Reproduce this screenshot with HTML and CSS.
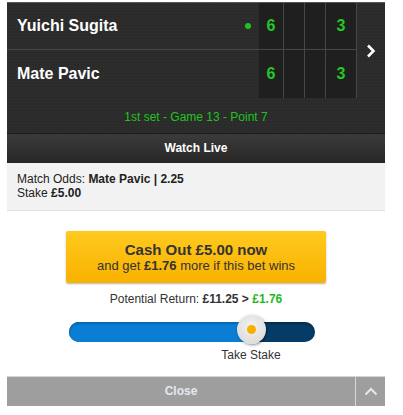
FILE: index.html
```html
<!DOCTYPE html>
<html lang="en">
<head>
  <meta charset="UTF-8">
  <meta name="viewport" content="width=device-width, initial-scale=1.0">
  <title>Cash Out</title>
  <link rel="stylesheet" href="styles.css">
</head>
<body>
  <div class="bet-card">
    <!-- Scoreboard -->
    <div class="scoreboard">
      <div class="player row-top">Yuichi Sugita <span class="serve"></span></div>
      <div class="cell c1 row-top">6</div>
      <div class="cell c2 row-top"></div>
      <div class="cell c3 row-top"></div>
      <div class="cell c4 row-top">3</div>
      <div class="more">
        <svg width="10" height="14" viewBox="0 0 10 14"><path d="M2 1.5 L7.5 7 L2 12.5" fill="none" stroke="#fff" stroke-width="2.6"/></svg>
      </div>
      <div class="player">Mate Pavic</div>
      <div class="cell c1">6</div>
      <div class="cell c2"></div>
      <div class="cell c3"></div>
      <div class="cell c4">3</div>
      <div class="status">1st set - Game 13 - Point 7</div>
    </div>
    <div class="watch-live">Watch Live</div>

    <!-- Bet info -->
    <div class="bet-info">
      <div>Match Odds: <b>Mate Pavic | 2.25</b></div>
      <div>Stake <b>£5.00</b></div>
    </div>

    <!-- Cash out -->
    <div class="cashout">
      <button class="cashout-btn">
        <span class="main">Cash Out £5.00 now</span>
        <span class="sub">and get <b>£1.76</b> more if this bet wins</span>
      </button>
      <div class="potential">Potential Return: <b>£11.25 &gt;</b> <b class="green">£1.76</b></div>
      <div class="slider">
        <div class="track">
          <div class="fill" style="width: 74%"></div>
          <div class="knob" style="left: 74%"><span class="dot"></span></div>
        </div>
        <div class="slider-label" style="left: 74%">Take Stake</div>
      </div>
    </div>

    <div class="close-bar">
      <div class="close">Close</div>
      <div class="collapse">
        <svg width="14" height="9" viewBox="0 0 14 9"><path d="M1.5 7.5 L7 2 L12.5 7.5" fill="none" stroke="#e8e8e8" stroke-width="2"/></svg>
      </div>
    </div>
  </div>
</body>
</html>
```

FILE: styles.css
```css
/* Reset styles */
* {
  margin: 0;
  padding: 0;
  box-sizing: border-box;
}

body {
  font-family: "Liberation Sans", Arial, sans-serif;
  background-color: #fff;
  color: #222;
}

.bet-card {
  width: 378px;
  margin-left: 7px;
  padding-top: 2px;
}

/* Scoreboard */
.scoreboard {
  display: grid;
  grid-template-columns: 252px 25px 21px 21px 31px 28px;
  grid-template-rows: 47px 48px 35px;
  background-color: #2a2a2a;
  background-image:
    repeating-linear-gradient(0deg, rgba(255,255,255,0.012) 0 1px, transparent 1px 3px),
    repeating-linear-gradient(90deg, rgba(255,255,255,0.012) 0 1px, transparent 1px 3px);
  border-top: 1px solid #555;
}

.row-top {
  border-bottom: 1px solid #474747;
}

.player {
  display: flex;
  align-items: center;
  padding-left: 10px;
  color: #fff;
  font-size: 16px;
  font-weight: bold;
  position: relative;
}

.serve {
  position: absolute;
  right: 8px;
  top: 20px;
  width: 6px;
  height: 6px;
  border-radius: 50%;
  background: #1ec41e;
}

.cell {
  display: flex;
  align-items: center;
  justify-content: center;
  background-color: rgba(0, 0, 0, 0.28);
  color: #22c922;
  font-size: 16px;
  font-weight: bold;
  border-right: 1px solid #484848;
}

.more {
  grid-column: 6;
  grid-row: 1 / 3;
  display: flex;
  align-items: center;
  justify-content: center;
}

.status {
  grid-column: 1 / 7;
  display: flex;
  align-items: center;
  justify-content: center;
  color: #1ec41e;
  font-size: 12px;
  padding-top: 2px;
}

.watch-live {
  height: 30px;
  line-height: 29px;
  text-align: center;
  color: #fff;
  font-size: 12px;
  font-weight: bold;
  background: linear-gradient(#3b3b3b, #262626);
  border-top: 1px solid #1a1a1a;
}

/* Bet info */
.bet-info {
  background-color: #f2f2f2;
  border-bottom: 1px solid #e2e2e2;
  padding: 9px 10px 8px;
  font-size: 12px;
  line-height: 14px;
  color: #222;
  height: 48px;
}

/* Cash out */
.cashout {
  display: flex;
  flex-direction: column;
  align-items: center;
  padding-top: 20px;
}

.cashout-btn {
  width: 260px;
  height: 52px;
  border: none;
  border-radius: 2px;
  background: linear-gradient(#ffca1e, #f9b100);
  box-shadow: 0 1px 2px rgba(0, 0, 0, 0.3);
  font-family: inherit;
  color: #333;
  display: flex;
  flex-direction: column;
  align-items: center;
  justify-content: center;
  cursor: pointer;
}

.cashout-btn .main {
  font-size: 15px;
  font-weight: bold;
  line-height: 17px;
}

.cashout-btn .sub {
  font-size: 13px;
  line-height: 16px;
}

.potential {
  margin-top: 9px;
  font-size: 12px;
  color: #333;
}

.green {
  color: #1fb81f;
}

.slider {
  position: relative;
  width: 246px;
  margin-top: 16px;
  margin-right: 8px;
  height: 44px;
}

.track {
  position: relative;
  height: 20px;
  border-radius: 10px;
  background: #053b67;
  box-shadow: inset 0 2px 2px rgba(0, 0, 0, 0.25);
}

.fill {
  height: 20px;
  border-radius: 10px 0 0 10px;
  background: #0a7ed4;
  box-shadow: inset 0 2px 2px rgba(0, 0, 0, 0.2);
}

.knob {
  position: absolute;
  top: -7px;
  width: 29px;
  height: 29px;
  margin-left: -14px;
  border-radius: 50%;
  background: radial-gradient(circle at 50% 40%, #f4f4f4, #d4d4d4);
  box-shadow: 1px 1px 3px rgba(0, 0, 0, 0.45);
  display: flex;
  align-items: center;
  justify-content: center;
}

.dot {
  width: 9px;
  height: 9px;
  border-radius: 50%;
  background: #f8b000;
}

.slider-label {
  position: absolute;
  top: 26px;
  transform: translateX(-50%);
  font-size: 12px;
  color: #333;
  white-space: nowrap;
}

/* Close bar */
.close-bar {
  display: flex;
  margin-top: 10px;
  height: 30px;
  background: #9e9e9e;
  border-top: 1px solid #d4d4d4;
}

.close {
  flex: 1;
  text-align: center;
  line-height: 29px;
  font-size: 12px;
  font-weight: bold;
  color: #e4e9ef;
}

.collapse {
  width: 30px;
  border-left: 1px solid #d8d8d8;
  display: flex;
  align-items: center;
  justify-content: center;
}
```
